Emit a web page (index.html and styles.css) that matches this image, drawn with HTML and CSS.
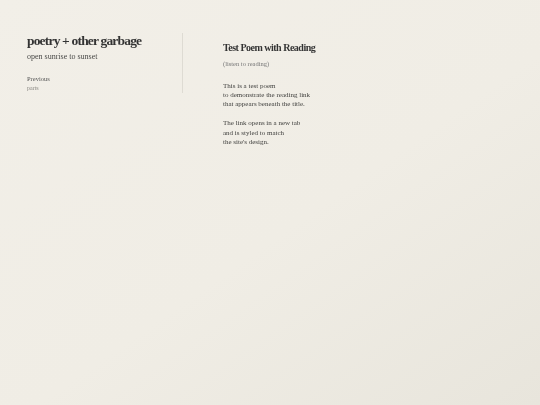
FILE: index.html
```html
<!DOCTYPE html>
<html lang="en">
<head>
    <meta charset="UTF-8">
    <meta name="viewport" content="width=device-width, initial-scale=1.0">
    <title>poetry + other garbage</title>
    <link rel="stylesheet" href="styles.css">
</head>
<body>
    <div class="layout">
        <div class="sidebar">
            <h1 class="site-title">poetry + other garbage</h1>
            <p class="tagline">open sunrise to sunset</p>
            <a class="nav-link" href="#">Previous</a>
            <a class="nav-sub" href="#">parts</a>
        </div>
        <div class="content">
            <h2 class="poem-title">Test Poem with Reading</h2>
            <a class="reading-link" href="#">(listen to reading)</a>
            <p class="stanza">This is a test poem<br>to demonstrate the reading link<br>that appears beneath the title.</p>
            <p class="stanza">The link opens in a new tab<br>and is styled to match<br>the site's design.</p>
        </div>
    </div>
</body>
</html>
```

FILE: styles.css
```css
html, body {
    height: 100%;
}
body {
    margin: 0;
    font-family: "Liberation Serif", serif;
    color: #3a3a38;
    background-color: #f0ede5;
    background-image: linear-gradient(145deg, #f2efe8 0%, #f0ede5 55%, #e8e5dc 100%);
    overflow: hidden;
}
.layout {
    display: flex;
    align-items: flex-start;
    padding-top: 33px;
    filter: blur(0.3px);
}
.sidebar {
    width: 155px;
    height: 60px;
    padding-left: 27px;
    border-right: 1px solid #dedbd3;
}
.site-title {
    margin: 0;
    font-size: 13.5px;
    line-height: 16px;
    font-weight: bold;
    letter-spacing: -0.82px;
    color: #333;
    white-space: nowrap;
}
.tagline {
    margin: 2px 0 0;
    font-size: 8px;
    line-height: 11px;
    color: #4a4a48;
}
.nav-link {
    display: block;
    margin-top: 12px;
    font-size: 6.5px;
    line-height: 9px;
    color: #555;
    text-decoration: none;
}
.nav-sub {
    display: block;
    margin-top: 1px;
    font-size: 6px;
    line-height: 8px;
    color: #8a8882;
    text-decoration: none;
}
.content {
    padding: 8px 0 0 40px;
}
.poem-title {
    margin: 0;
    font-size: 10px;
    line-height: 13px;
    font-weight: bold;
    letter-spacing: -0.5px;
    color: #333;
}
.reading-link {
    display: block;
    margin-top: 5px;
    font-size: 6.5px;
    line-height: 9px;
    color: #777;
    text-decoration: none;
}
.stanza {
    margin: 13.5px 0 10px;
    font-size: 7px;
    line-height: 9.33px;
    color: #3f3f3d;
}
.stanza + .stanza {
    margin-top: 10px;
}
```
